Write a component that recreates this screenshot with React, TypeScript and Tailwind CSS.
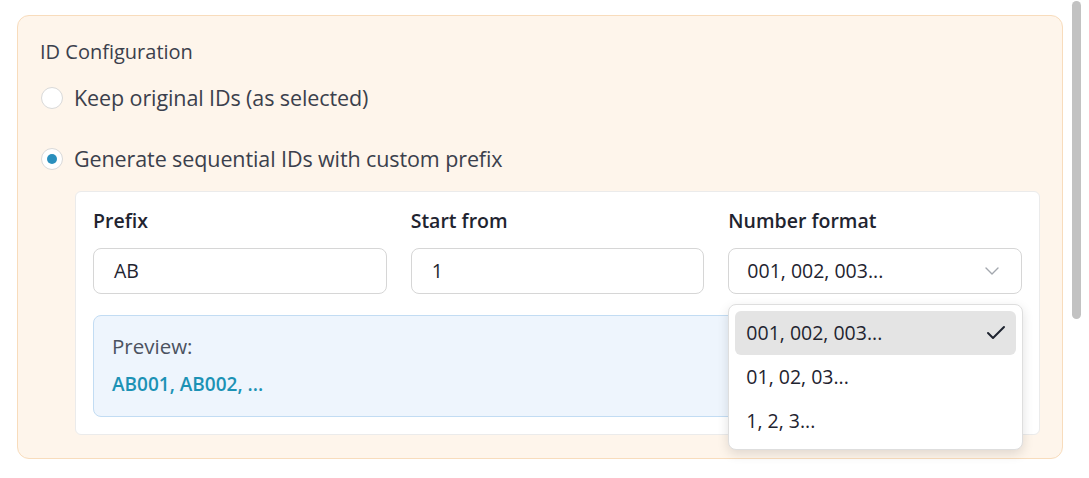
import React, { useState } from "react";

const FONT = { fontFamily: '"Open Sans", "Liberation Sans", sans-serif' };

const FORMATS = ["001, 002, 003...", "01, 02, 03...", "1, 2, 3..."];

function Radio({ checked, label }: { checked: boolean; label: string }) {
  return (
    <label className="flex h-[30px] items-center gap-[11px]">
      <span className="ml-[1px] flex h-[22px] w-[22px] shrink-0 items-center justify-center rounded-full border border-[#d9d9d9] bg-white">
        {checked && <span className="h-[10px] w-[10px] rounded-full bg-[#2a8fbd]" />}
      </span>
      <span className="text-[21.5px] leading-[30px] tracking-[-0.1px] text-[#3b404c]">{label}</span>
    </label>
  );
}

export default function App() {
  const [format] = useState(FORMATS[0]);

  return (
    <div className="relative min-h-[478px] bg-white" style={FONT}>
      <div className="w-[1080px] px-[17px] pt-[15px] pb-[18px]">
        <div className="rounded-[12px] border border-[#f8dcbc] bg-[#fef5eb] px-[22px] pt-[23px] pb-[23px]">
          <h2 className="text-[20px] leading-[26px] text-[#3b404c]">ID Configuration</h2>

          <div className="mt-[18px] flex flex-col gap-[31px]">
            <Radio checked={false} label="Keep original IDs (as selected)" />
            <Radio checked={true} label="Generate sequential IDs with custom prefix" />
          </div>

          <div className="ml-[35px] mt-[17px] rounded-[6px] border border-[#ebebeb] bg-white px-[17px] pt-[17px] pb-[17px]">
            <div className="grid grid-cols-3 gap-x-[24px]">
              <div>
                <div className="text-[19.5px] font-semibold leading-[24px] text-[#1f2430]">Prefix</div>
                <div className="mt-[15px] flex h-[46px] items-center rounded-[8px] border border-[#d6d6d6] bg-white px-[20px] text-[19.5px] text-[#1f2430]">
                  AB
                </div>
              </div>
              <div>
                <div className="text-[19.5px] font-semibold leading-[24px] text-[#1f2430]">Start from</div>
                <div className="mt-[15px] flex h-[46px] items-center rounded-[8px] border border-[#d6d6d6] bg-white px-[20px] text-[19.5px] text-[#1f2430]">
                  1
                </div>
              </div>
              <div className="relative">
                <div className="text-[19.5px] font-semibold leading-[24px] text-[#1f2430]">Number format</div>
                <div className="mt-[15px] flex h-[46px] items-center justify-between rounded-[8px] border border-[#d6d6d6] bg-white pl-[18px] pr-[22px] text-[19.5px] text-[#1f2430]">
                  <span>{format}</span>
                  <svg width="14" height="8" viewBox="0 0 14 8" fill="none" stroke="#a3a7ae" strokeWidth="1.4" strokeLinecap="round" strokeLinejoin="round">
                    <path d="M1 1l6 6 6-6" />
                  </svg>
                </div>

                <div className="absolute left-0 top-[95px] z-10 w-[295px] rounded-[8px] border border-[#dedede] bg-white p-[6px] shadow-[0_4px_12px_rgba(0,0,0,0.12)]">
                  {FORMATS.map((f) => (
                    <div
                      key={f}
                      className={
                        "flex h-[44px] items-center justify-between rounded-[6px] pl-[11px] pr-[8px] text-[19.5px] text-[#1f2430] " +
                        (f === format ? "bg-[#e4e4e4]" : "")
                      }
                    >
                      <span>{f}</span>
                      {f === format && (
                        <svg width="24" height="24" viewBox="0 0 24 24" fill="none" stroke="#1f2430" strokeWidth="2" strokeLinecap="round" strokeLinejoin="round">
                          <path d="M20 6 9 17l-5-5" />
                        </svg>
                      )}
                    </div>
                  ))}
                </div>
              </div>
            </div>

            <div className="mt-[21px] rounded-[8px] border border-[#c2dcf3] bg-[#eef5fd] px-[18px] pt-[17px] pb-[19px]">
              <div className="text-[20.5px] leading-[26px] text-[#4b5260]">Preview:</div>
              <div className="mt-[12px] text-[19px] font-semibold leading-[26px] text-[#1c92b5]">AB001, AB002, ...</div>
            </div>
          </div>
        </div>
      </div>

      <div className="absolute right-[8px] top-[1px] h-[318px] w-[9px] rounded-full bg-[#c2c2c2]" />
    </div>
  );
}
